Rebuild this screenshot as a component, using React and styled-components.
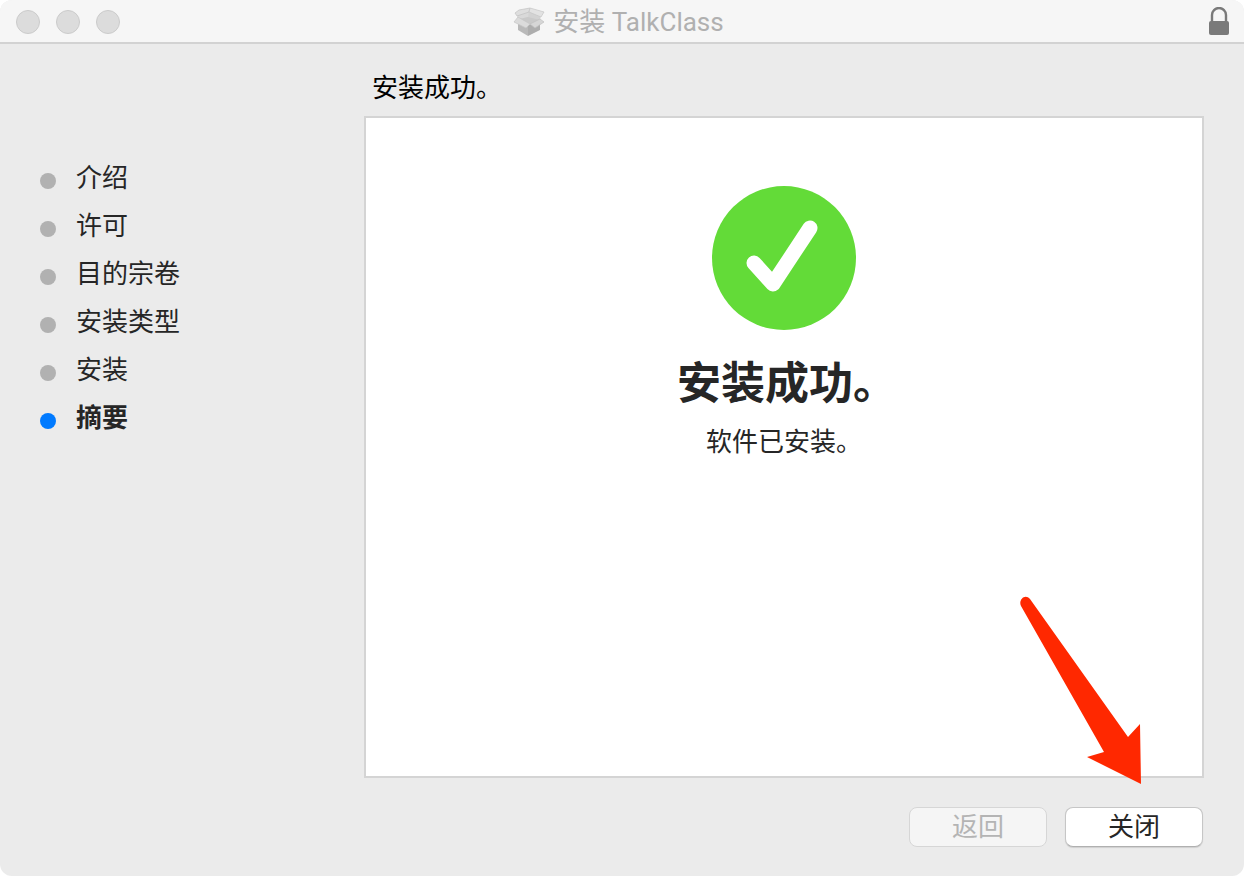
import styled, { createGlobalStyle, css } from "styled-components";

const steps = ["介绍", "许可", "目的宗卷", "安装类型", "安装", "摘要"];
const currentStep = "摘要";

const PackageIcon = () => (
  <svg width="32" height="30" viewBox="0 0 32 30" aria-hidden="true">
    <path d="M5 13 L15 18 L15 29 L5 23 Z" fill="#b9b9b9" />
    <path d="M15 18 L27 13 L27 23 L15 29 Z" fill="#adadad" />
    <path d="M4 8 L16 4 L28 8 L27 13 L17 18 L5 11 Z" fill="#d2d2d2" />
    <path d="M16 4 L15 10 L6 13 L4 8 Z" fill="#d9d9d9" />
    <path d="M15 10 L27 13 L17 18 L6 12 Z" fill="#c9c9c9" />
    <path d="M2 6 L6 3 L17 1 L16 5 L4 9 Z" fill="#dedede" stroke="#c2c2c2" strokeWidth="0.7" />
    <path d="M17 1 L31 5 L28 10 L16 5 Z" fill="#e2e2e2" stroke="#c6c6c6" strokeWidth="0.7" />
    <path d="M5 10 L17 17 L13 21 L1 15 Z" fill="#dbdbdb" stroke="#c6c6c6" strokeWidth="0.7" />
    <path d="M17 17 L27 12 L31 15 L22 21 Z" fill="#d6d6d6" stroke="#c0c0c0" strokeWidth="0.7" />
  </svg>
);

const LockIcon = () => (
  <svg width="20" height="30" viewBox="0 0 20 30" aria-hidden="true">
    <path d="M3 15 V8 a7 7 0 0 1 14 0 V15" fill="none" stroke="#7a7a7a" strokeWidth="2.4" />
    <rect x="0" y="14" width="20" height="14" rx="2" fill="#7a7a7a" />
  </svg>
);

const SuccessIcon = () => (
  <svg width="144" height="144" viewBox="0 0 144 144" aria-hidden="true">
    <circle cx="72" cy="72" r="72" fill="#63db38" />
    <path
      d="M42 77 L61 98 L98 42"
      fill="none"
      stroke="#fff"
      strokeWidth="15"
      strokeLinecap="round"
      strokeLinejoin="round"
    />
  </svg>
);

const App = () => {
  return (
    <>
      <GlobalStyle />
      <Window>
        <TitleBar>
          <Lights>
            <Light aria-label="关闭窗口" />
            <Light aria-label="最小化" />
            <Light aria-label="缩放" />
          </Lights>
          <Title>
            <PackageIcon />
            安装 TalkClass
          </Title>
          <Lock>
            <LockIcon />
          </Lock>
        </TitleBar>

        <Content>
          <Sidebar>
            {steps.map((step) => (
              <Step key={step} $active={step === currentStep}>
                {step}
              </Step>
            ))}
          </Sidebar>

          <Main>
            <Message>安装成功。</Message>
            <Panel>
              <SuccessIcon />
              <Headline>安装成功。</Headline>
              <Detail>软件已安装。</Detail>
            </Panel>
            <Footer>
              <Button disabled>返回</Button>
              <CloseWrap>
                <Button>关闭</Button>
                {/* red arrow pointing at the close button */}
                <Arrow width="126" height="190" viewBox="0 0 126 190" aria-hidden="true">
                  <path
                    d="M3 12 C0 6 7 -1 12 5 L110 143 L122 130 L123 190 L69 163 L86 158 Z"
                    fill="#ff2800"
                  />
                </Arrow>
              </CloseWrap>
            </Footer>
          </Main>
        </Content>
      </Window>
    </>
  );
};

const GlobalStyle = createGlobalStyle`
  * {
    box-sizing: border-box;
  }

  body {
    margin: 0;
    background: #fff;
    color: #262626;
    font-family: Roboto, "Noto Sans CJK SC", sans-serif;
    font-size: 26px;
    line-height: 40px;
  }
`;

const Window = styled.div`
  min-height: 100vh;
  display: flex;
  flex-direction: column;
  background: #ebebeb;
  border-radius: 12px;
  overflow: hidden;
`;

const TitleBar = styled.header`
  height: 44px;
  display: grid;
  grid-template-columns: 1fr auto 1fr;
  align-items: center;
  padding: 2px 15px 0 16px;
  background: #f6f6f6;
  border-bottom: 2px solid #d2d2d2;
`;

const Lights = styled.div`
  display: flex;
  gap: 16px;
`;

const Light = styled.button`
  width: 24px;
  height: 24px;
  padding: 0;
  border: 1px solid #cbcbcb;
  border-radius: 50%;
  background: #dcdcdc;
`;

const Title = styled.h1`
  display: flex;
  align-items: center;
  gap: 8px;
  margin: 0;
  padding-right: 8px;
  font-size: 26px;
  font-weight: 400;
  color: #b0b0b0;
`;

const Lock = styled.div`
  display: flex;
  justify-content: flex-end;
`;

const Content = styled.div`
  flex: 1;
  display: flex;
`;

const Sidebar = styled.ol`
  width: 364px;
  flex-shrink: 0;
  margin: 0;
  padding: 110px 0 0 40px;
  list-style: none;
`;

const Step = styled.li`
  display: flex;
  align-items: center;
  gap: 20px;
  height: 48px;
  font-weight: ${({ $active }) => ($active ? 700 : 400)};

  &::before {
    content: "";
    width: 16px;
    height: 16px;
    margin-top: 5px;
    border-radius: 50%;
    background: ${({ $active }) => ($active ? "#007aff" : "#b1b1b1")};
  }
`;

const Main = styled.main`
  flex: 1;
  display: flex;
  flex-direction: column;
  padding: 24px 40px 29px 0;
`;

const Message = styled.p`
  margin: 0 0 8px;
  padding-left: 8px;
  color: #000;
`;

const Panel = styled.section`
  flex: 1;
  display: flex;
  flex-direction: column;
  align-items: center;
  padding-top: 68px;
  background: #fff;
  border: 2px solid #d4d4d4;
`;

const Headline = styled.h2`
  margin: 22px 0 6px;
  padding-left: 6px;
  font-size: 44px;
  line-height: 64px;
  font-weight: 700;
`;

const Detail = styled.p`
  margin: 0;
`;

const Footer = styled.footer`
  display: flex;
  justify-content: flex-end;
  gap: 18px;
  padding: 29px 1px 0 0;
`;

const Button = styled.button`
  display: block;
  width: 138px;
  height: 40px;
  padding: 0;
  border: 1px solid #c6c6c6;
  border-bottom-color: #b0b0b0;
  border-radius: 8px;
  background: #fff;
  box-shadow: 0 1px 1px rgba(0, 0, 0, 0.12);
  color: #262626;
  font: inherit;
  line-height: 38px;

  ${({ disabled }) =>
    disabled &&
    css`
      border-color: #d6d6d6;
      background: #f5f5f5;
      box-shadow: none;
      color: #b4b4b4;
    `}
`;

const CloseWrap = styled.div`
  position: relative;
`;

const Arrow = styled.svg`
  position: absolute;
  right: 59px;
  bottom: 63px;
  pointer-events: none;
`;

export default App;
